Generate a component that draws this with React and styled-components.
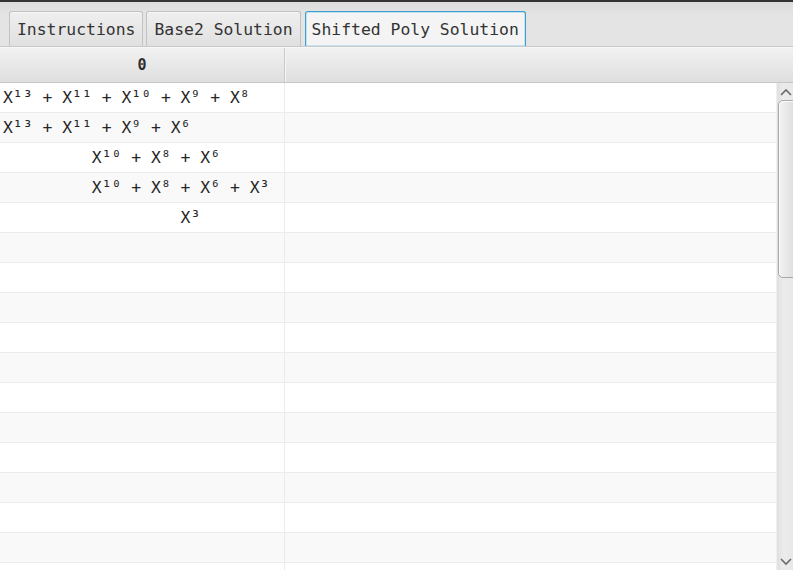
import React from "react";
import styled, { createGlobalStyle } from "styled-components";

const GlobalStyle = createGlobalStyle`
  html, body {
    margin: 0;
    padding: 0;
    background: #ffffff;
    overflow: hidden;
  }
`;

const MONO = `"DejaVu Sans Mono", "Liberation Mono", monospace`;

const tabs = ["Instructions", "Base2 Solution", "Shifted Poly Solution"];

const rows = [
  "X¹³ + X¹¹ + X¹⁰ + X⁹ + X⁸",
  "X¹³ + X¹¹ + X⁹ + X⁶",
  "         X¹⁰ + X⁸ + X⁶",
  "         X¹⁰ + X⁸ + X⁶ + X³",
  "                  X³",
];

const ROW_COUNT = 17;

const App = () => {
  const allRows = Array.from({ length: ROW_COUNT }, (_, i) => rows[i] || "");

  return (
    <Page>
      <GlobalStyle />
      <TopBar />
      <TabHeader>
        {tabs.map((t, i) => (
          <Tab key={t} $selected={i === 2}>
            {t}
          </Tab>
        ))}
      </TabHeader>

      <Table>
        <HeaderRow>
          <HeaderCell>0</HeaderCell>
          <HeaderCell />
        </HeaderRow>

        <Body>
          <Rows>
            {allRows.map((text, i) => (
              <Row key={i} $alt={i % 2 === 1}>
                <Cell>{text}</Cell>
                <Cell $last />
              </Row>
            ))}
          </Rows>

          <ScrollBar>
            <Arrow>
              <svg width="12" height="8" viewBox="0 0 12 8">
                <polyline points="1,7 6,2 11,7" fill="none" stroke="#6b6b6b" strokeWidth="1.6" />
              </svg>
            </Arrow>
            <Thumb />
            <Track />
            <Arrow>
              <svg width="12" height="8" viewBox="0 0 12 8">
                <polyline points="1,1 6,6 11,1" fill="none" stroke="#6b6b6b" strokeWidth="1.6" />
              </svg>
            </Arrow>
          </ScrollBar>
        </Body>
      </Table>
    </Page>
  );
};

export default App;

const Page = styled.div`
  width: 793px;
  height: 570px;
  display: flex;
  flex-direction: column;
  overflow: hidden;
  font-family: ${MONO};
  color: #2a2a2a;
`;

const TopBar = styled.div`
  height: 2px;
  background: #343434;
  flex: none;
`;

const TabHeader = styled.div`
  height: 45px;
  flex: none;
  display: flex;
  align-items: flex-end;
  gap: 3px;
  padding-left: 9px;
  box-sizing: border-box;
  background: linear-gradient(to bottom, #dcdcdc 0%, #e4e4e4 30%, #e4e4e4 100%);
  border-bottom: 1px solid #c9c9c9;
`;

const Tab = styled.div`
  height: 35px;
  box-sizing: border-box;
  display: flex;
  align-items: center;
  padding: 0 ${(p) => (p.$selected ? "6px" : "7px")};
  margin-left: ${(p) => (p.$selected ? "1px" : "0")};
  font-size: 16.4px;
  color: #333333;
  border-radius: 3px 3px 0 0;
  border: 1px solid ${(p) => (p.$selected ? "#3c9fcf" : "#c2c2c2")};
  border-bottom: none;
  background: ${(p) =>
    p.$selected
      ? "#f4f4f4"
      : "linear-gradient(to bottom, #efefef 0%, #e6e6e6 60%, #e0e0e0 100%)"};
  box-shadow: ${(p) =>
    p.$selected ? "inset 0 0 0 1px #c4e2f1" : "inset 0 1px 0 #f7f7f7"};
`;

const Table = styled.div`
  flex: 1;
  display: flex;
  flex-direction: column;
  min-height: 0;
  background: #ffffff;
`;

const HeaderRow = styled.div`
  height: 36px;
  flex: none;
  box-sizing: border-box;
  display: grid;
  grid-template-columns: 285px 1fr;
  background: linear-gradient(to bottom, #f1f1f1 0%, #e6e6e6 60%, #dedede 100%);
  border-top: 1px solid #f7f7f7;
  border-bottom: 1px solid #c6c6c6;
`;

const HeaderCell = styled.div`
  display: flex;
  align-items: center;
  justify-content: center;
  font-size: 15px;
  font-weight: bold;
  color: #2e2e2e;
  border-right: 1px solid #c8c8c8;
  box-shadow: 1px 0 0 #f6f6f6;

  &:last-child {
    border-right: none;
    box-shadow: none;
  }
`;

const Body = styled.div`
  flex: 1;
  display: flex;
  min-height: 0;
`;

const Rows = styled.div`
  flex: 1;
  display: flex;
  flex-direction: column;
  overflow: hidden;
`;

const Row = styled.div`
  height: 30px;
  flex: none;
  box-sizing: border-box;
  display: grid;
  grid-template-columns: 285px 1fr;
  background: ${(p) => (p.$alt ? "#f9f9f9" : "#ffffff")};
  border-bottom: 1px solid #ececec;
`;

const Cell = styled.div`
  display: flex;
  align-items: center;
  padding-left: 3px;
  font-size: 16.4px;
  color: #262626;
  white-space: pre;
  border-right: ${(p) => (p.$last ? "none" : "1px solid #ebebeb")};
`;

const ScrollBar = styled.div`
  width: 17px;
  flex: none;
  display: flex;
  flex-direction: column;
  overflow: hidden;
  background: linear-gradient(to right, #e0e0e0 0%, #ebebeb 40%, #e8e8e8 100%);
  border-left: 1px solid #f0f0f0;
  box-sizing: border-box;
`;

const Arrow = styled.div`
  height: 17px;
  flex: none;
  display: flex;
  align-items: center;
  justify-content: center;
  padding-left: 2px;
`;

const Thumb = styled.div`
  height: 178px;
  flex: none;
  width: 20px;
  margin-left: 1px;
  box-sizing: border-box;
  border: 1px solid #a9a9a9;
  border-radius: 5px;
  background: linear-gradient(to right, #f3f3f3 0%, #e6e6e6 50%, #dadada 100%);
  box-shadow: inset 1px 1px 0 #fbfbfb;
`;

const Track = styled.div`
  flex: 1;
`;
